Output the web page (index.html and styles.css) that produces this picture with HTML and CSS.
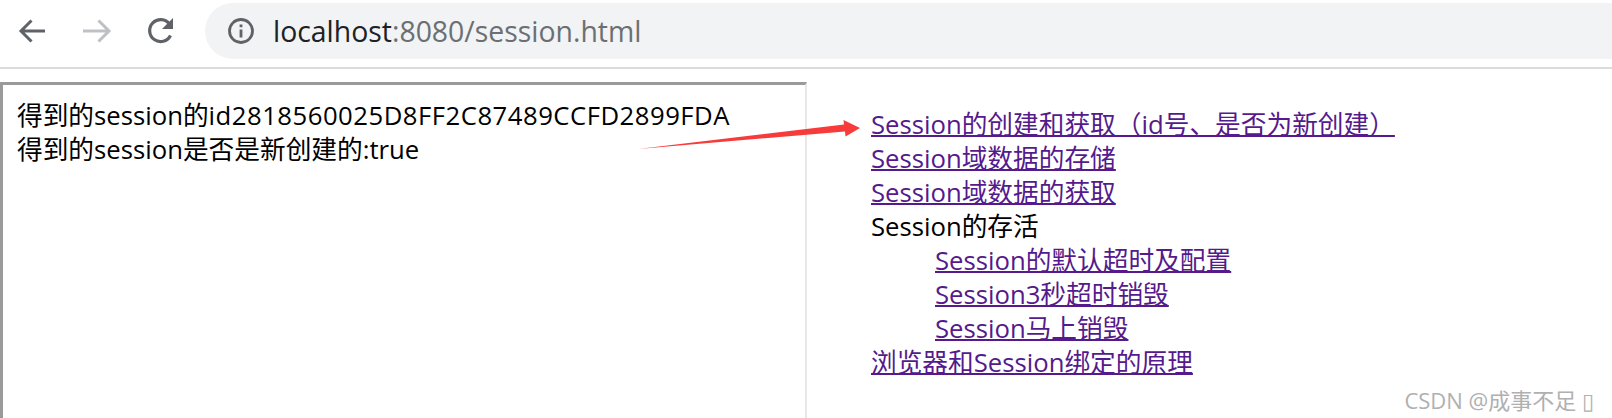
FILE: index.html
```html
<!DOCTYPE html>
<html lang="zh">
<head>
    <meta charset="UTF-8">
    <title>session</title>
    <link rel="stylesheet" href="styles.css">
</head>
<body>
    <header class="toolbar">
        <svg class="nav-icon" viewBox="0 0 32 32"><path d="M28 16H5M14.500 5.500L4 16l10.500 10.500" fill="none" stroke="#5f6368" stroke-width="3"/></svg>
        <svg class="nav-icon" viewBox="0 0 32 32"><path d="M2 16h25M17.500 5.500L28 16 17.500 26.500" fill="none" stroke="#bdc1c6" stroke-width="3"/></svg>
        <svg class="nav-icon" viewBox="0 0 32 32"><path d="M25.500 20.500A11 11 0 1 1 24.500 9" fill="none" stroke="#5f6368" stroke-width="3.200"/><path d="M28 3v11H17z" fill="#5f6368"/></svg>
        <div class="omnibox">
            <svg class="info-icon" viewBox="0 0 28 28"><circle cx="14" cy="14" r="11.500" fill="none" stroke="#5f6368" stroke-width="2.800"/><path d="M12.600 12.500h2.800v8h-2.800zM12.600 7.500h2.800v2.800h-2.800z" fill="#5f6368"/></svg>
            <span class="url"><span class="host">localhost</span>:8080/session.html</span>
        </div>
    </header>

    <main class="page">
        <div class="frame">
            得到的session的<span class="sid">id2818560025D8FF2C87489CCFD2899FDA</span><br>
            得到的session是否是新创建的:true
        </div>
        <nav class="menu">
            <a href="#">Session的创建和获取（id号、是否为新创建）</a>
            <a href="#">Session域数据的存储</a>
            <a href="#">Session域数据的获取</a>
            <span>Session的存活</span>
            <a class="sub" href="#">Session的默认超时及配置</a>
            <a class="sub" href="#">Session3秒超时销毁</a>
            <a class="sub" href="#">Session马上销毁</a>
            <a href="#">浏览器和Session绑定的原理</a>
        </nav>
    </main>

    <!-- red arrow drawn over the screenshot -->
    <svg class="arrow" viewBox="0 0 240 40"><path d="M8 29L214 4.500 213.500 0 230 8 215.500 16.500 215 11.500z" fill="#f73b3b"/></svg>
    <div class="watermark">CSDN @成事不足 ▯</div>
</body>
</html>
```

FILE: styles.css
```css
html, body {
    margin: 0;
    height: 100%;
    overflow: hidden;
    background-color: white;
}
body {
    display: flex;
    flex-direction: column;
    font-family: "Open Sans", "Noto Sans CJK SC", sans-serif;
    font-size: 25.7px;
    line-height: 34px;
    color: black;
}
.toolbar {
    display: flex;
    align-items: center;
    height: 56px;
    padding: 3px 0 8px 17px;
    border-bottom: 2px solid #dadce0;
}
.nav-icon {
    width: 32px;
    height: 32px;
    margin-right: 32px;
}
.omnibox {
    display: flex;
    align-items: center;
    flex: 1;
    height: 56px;
    margin-left: -4px;
    padding-left: 22px;
    background-color: #f1f3f4;
    border-radius: 28px 0 0 28px;
}
.info-icon {
    width: 28px;
    height: 28px;
    margin-right: 18px;
}
.url {
    font-size: 28.400px;
    color: #6b6f73;
}
.host {
    color: #202124;
}
.page {
    display: flex;
    flex: 1;
    min-height: 0;
    margin-top: 13px;
}
.frame {
    width: 788px;
    padding: 14px 0 0 14px;
    border-style: solid;
    border-width: 3px 2px 0 3px;
    border-color: #9a9a9a #e8e8e8 #e8e8e8 #9a9a9a;
    flex-shrink: 0;
}
.sid {
    letter-spacing: 0.500px;
}
.menu {
    display: flex;
    flex-direction: column;
    align-items: flex-start;
    padding: 26px 0 0 64px;
}
.menu a {
    color: #551a8b;
    text-decoration: underline;
    text-decoration-thickness: 2px;
}
.menu a.sub {
    margin-left: 64px;
}
.arrow {
    position: absolute;
    left: 630px;
    top: 120px;
    width: 240px;
    height: 40px;
}
.watermark {
    position: absolute;
    right: 18px;
    bottom: 6px;
    font-size: 22px;
    line-height: 24px;
    color: #b0b0b0;
}
```
